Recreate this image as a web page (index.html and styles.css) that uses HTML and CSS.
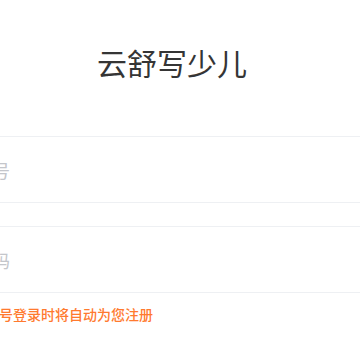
FILE: index.html
```html
<!DOCTYPE html>
<html lang="zh-CN">
<head>
    <meta charset="UTF-8">
    <meta name="viewport" content="width=device-width, initial-scale=1.0">
    <title>云舒写少儿 - 登录</title>
    <link rel="stylesheet" href="styles.css">
</head>
<body>
    <div class="page">
        <div class="header">
            <h1>云舒写少儿</h1>
        </div>

        <div class="login-form">
            <div class="field">
                <input type="tel" class="field-input" placeholder="请输入手机号">
            </div>
            <div class="field">
                <input type="text" class="field-input" placeholder="请输入验证码">
            </div>
            <p class="tip">未注册的手机号登录时将自动为您注册</p>
        </div>
    </div>
</body>
</html>
```

FILE: styles.css
```css
* {
    margin: 0;
    padding: 0;
    box-sizing: border-box;
}

html,
body {
    overflow: hidden;
}

body {
    font-family: "Noto Sans CJK SC", "Noto Sans", sans-serif;
    background: #ffffff;
    color: #3a3a3a;
    min-height: 100vh;
}

.page {
    width: 604px;
    margin-left: -130px;
}

.header {
    text-align: center;
    padding-top: 44px;
}

.header h1 {
    font-size: 30px;
    line-height: 36px;
    font-weight: 400;
    color: #353535;
}

.login-form {
    margin-top: 56px;
    padding-left: 32px;
}

.field {
    height: 67px;
    display: flex;
    align-items: center;
    border-top: 1px solid #eef0f3;
    border-bottom: 1px solid #eef0f3;
}

.field + .field {
    margin-top: 23px;
}

.field-input {
    width: 100%;
    border: none;
    outline: none;
    background: transparent;
    font-family: inherit;
    font-size: 18px;
    color: #333;
}

.field-input::placeholder {
    color: #c4c6cb;
}

.tip {
    margin-top: 11px;
    padding-left: 13px;
    font-size: 14px;
    line-height: 20px;
    font-weight: 500;
    color: #ff7a2f;
}
```
